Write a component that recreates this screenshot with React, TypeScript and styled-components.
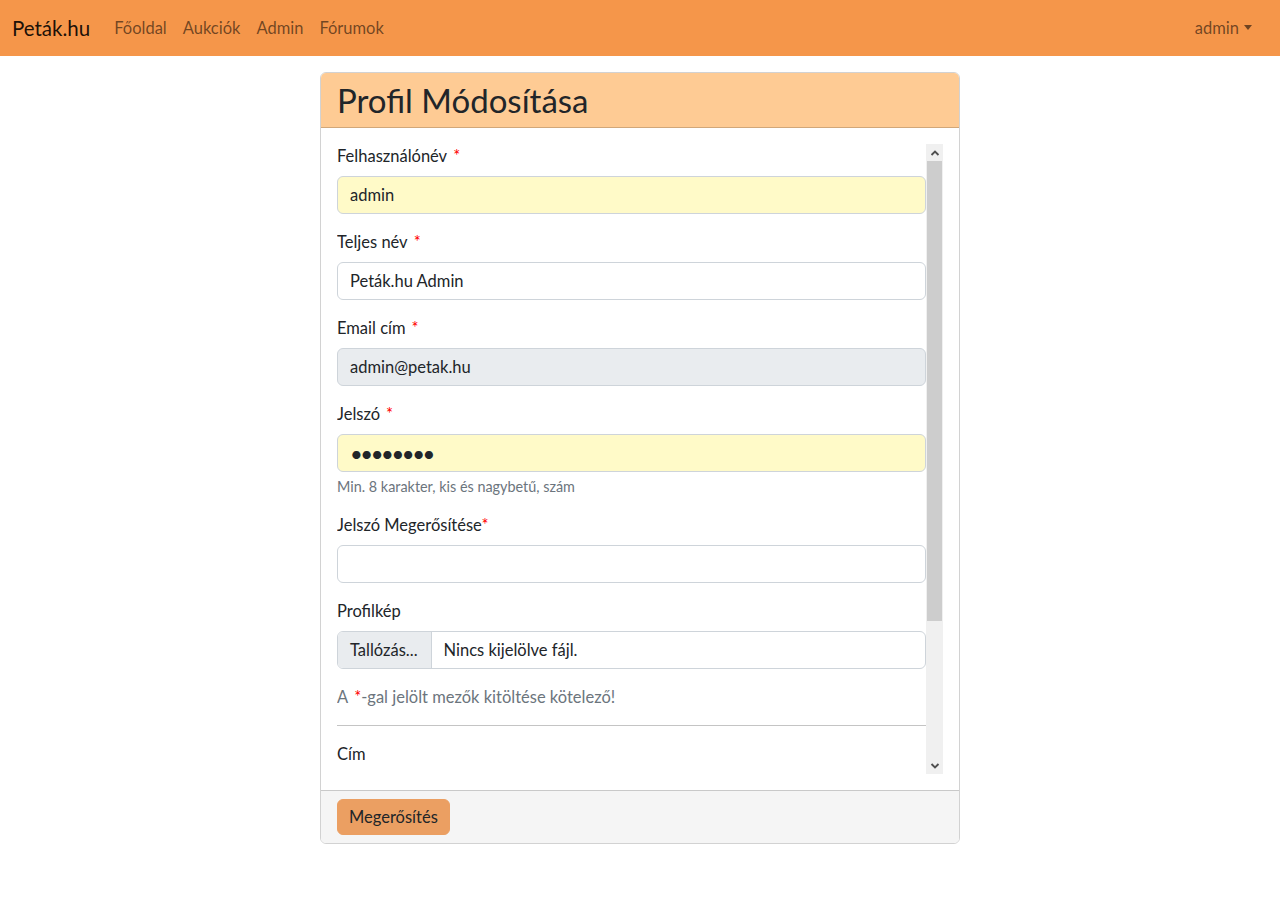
import React from "react";
import styled, { createGlobalStyle } from "styled-components";

const GlobalStyle = createGlobalStyle`
  * { box-sizing: border-box; }
  html, body { margin: 0; padding: 0; background: #fff; }
  body {
    font-family: Lato, "Noto Sans", sans-serif;
    font-size: 16.5px;
    line-height: 24px;
    color: #212529;
  }
`;

const Navbar = styled.nav`
  height: 56px;
  background: #f5964a;
  display: flex;
  align-items: center;
  padding: 0 20px 0 12px;
`;

const Brand = styled.a`
  font-size: 20.5px;
  line-height: 30px;
  color: rgba(0, 0, 0, 0.9);
  text-decoration: none;
  margin-right: 16px;
`;

const NavList = styled.div`
  display: flex;
  flex: 1;
`;

const NavLink = styled.a`
  color: rgba(0, 0, 0, 0.55);
  text-decoration: none;
  padding: 8px;
`;

const Toggle = styled(NavLink)`
  display: flex;
  align-items: center;
  &::after {
    content: "";
    display: inline-block;
    margin-left: 5px;
    border-top: 5px solid;
    border-right: 4px solid transparent;
    border-left: 4px solid transparent;
    margin-top: -2px;
  }
`;

const Main = styled.main`
  display: flex;
  justify-content: center;
  padding-top: 16px;
`;

const Card = styled.div`
  width: 640px;
  border: 1px solid rgba(0, 0, 0, 0.175);
  border-radius: 6px;
  overflow: hidden;
`;

const CardHeader = styled.div`
  background: #fecb94;
  padding: 8px 16px;
  border-bottom: 1px solid rgba(0, 0, 0, 0.175);
`;

const Title = styled.h2`
  margin: 0;
  font-size: 33px;
  font-weight: 400;
  line-height: 38px;
`;

const CardBody = styled.div`
  padding: 16px;
`;

const ScrollFrame = styled.div`
  display: flex;
  height: 630px;
`;

const ScrollContent = styled.div`
  flex: 1;
  min-width: 0;
  overflow: hidden;
`;

const ScrollBar = styled.div`
  width: 17px;
  flex: none;
  display: flex;
  flex-direction: column;
  background: #f0f0f0;
`;

const ScrollButton = styled.div`
  height: 17px;
  display: flex;
  align-items: center;
  justify-content: center;
  color: #505050;
`;

const Thumb = styled.div`
  margin: 0 1px;
  background: #cdcdcd;
`;

const Group = styled.div<{ $mb?: number }>`
  margin-bottom: ${(p) => (p.$mb ?? 16)}px;
`;

const Label = styled.label`
  display: block;
  margin-bottom: 8px;
`;

const Star = styled.span<{ $tight?: boolean }>`
  color: red;
  margin-left: ${(p) => (p.$tight ? 0 : 6)}px;
`;

const Input = styled.input<{ $variant?: "fill" | "disabled" | "plain" }>`
  display: block;
  width: 100%;
  height: 38px;
  padding: 6px 12px;
  font: inherit;
  color: #212529;
  border: 1px solid #ced4da;
  border-radius: 6px;
  outline: none;
  background: ${(p) =>
    p.$variant === "fill" ? "#fffac8" : p.$variant === "disabled" ? "#e9ecef" : "#fff"};
`;

const Dots = styled(Input)`
  letter-spacing: -2.4px;
  font-size: 22px;
`;

const Help = styled.div`
  margin-top: 4px;
  font-size: 14.4px;
  line-height: 21px;
  color: #6c757d;
`;

const FileBox = styled.div`
  display: flex;
  height: 38px;
  border: 1px solid #ced4da;
  border-radius: 6px;
  overflow: hidden;
`;

const FileButton = styled.span`
  background: #e9ecef;
  padding: 6px 13px 6px 12px;
  border-right: 1px solid #ced4da;
  display: flex;
  align-items: center;
`;

const FileName = styled.span`
  padding: 6px 12px;
  display: flex;
  align-items: center;
`;

const Muted = styled.p`
  margin: 0 0 16px;
  color: #6c757d;
`;

const NoteStar = styled.span`
  color: red;
  margin-left: 6px;
`;

const Rule = styled.hr`
  margin: 16px 0;
  border: 0;
  border-top: 1px solid #c4c4c4;
`;

const Row = styled.div`
  display: grid;
  grid-template-columns: 1fr 2fr;
  gap: 12px;
  margin-bottom: 16px;
`;

const CardFooter = styled.div`
  background: #f5f5f5;
  border-top: 1px solid rgba(0, 0, 0, 0.175);
  padding: 8px 16px;
`;

const Button = styled.button`
  font: inherit;
  color: #212529;
  background: #eb9f62;
  border: 1px solid #eb9f62;
  border-radius: 6px;
  padding: 5px 11px;
  height: 36px;
`;

const Chevron = ({ up }: { up?: boolean }) => (
  <svg width="10" height="10" viewBox="0 0 10 10">
    <path
      d={up ? "M1.5 7 L5 3.5 L8.5 7" : "M1.5 3 L5 6.5 L8.5 3"}
      fill="none"
      stroke="currentColor"
      strokeWidth="1.9"
    />
  </svg>
);

export default function App() {
  return (
    <>
      <GlobalStyle />
      <Navbar>
        <Brand href="#">Peták.hu</Brand>
        <NavList>
          <NavLink href="#">Főoldal</NavLink>
          <NavLink href="#">Aukciók</NavLink>
          <NavLink href="#">Admin</NavLink>
          <NavLink href="#">Fórumok</NavLink>
        </NavList>
        <Toggle href="#">admin</Toggle>
      </Navbar>
      <Main>
        <Card>
          <CardHeader>
            <Title>Profil Módosítása</Title>
          </CardHeader>
          <CardBody>
            <ScrollFrame>
              <ScrollContent>
                <Group>
                  <Label>
                    Felhasználónév<Star>*</Star>
                  </Label>
                  <Input $variant="fill" defaultValue="admin" />
                </Group>
                <Group>
                  <Label>
                    Teljes név<Star>*</Star>
                  </Label>
                  <Input defaultValue="Peták.hu Admin" />
                </Group>
                <Group>
                  <Label>
                    Email cím<Star>*</Star>
                  </Label>
                  <Input $variant="disabled" defaultValue="admin@petak.hu" disabled />
                </Group>
                <Group>
                  <Label>
                    Jelszó<Star>*</Star>
                  </Label>
                  <Dots $variant="fill" type="password" defaultValue="12345678" />
                  <Help>Min. 8 karakter, kis és nagybetű, szám</Help>
                </Group>
                <Group>
                  <Label>
                    Jelszó Megerősítése<Star $tight>*</Star>
                  </Label>
                  <Input type="password" />
                </Group>
                <Group>
                  <Label>Profilkép</Label>
                  <FileBox>
                    <FileButton>Tallózás...</FileButton>
                    <FileName>Nincs kijelölve fájl.</FileName>
                  </FileBox>
                </Group>
                <Muted>
                  A<NoteStar>*</NoteStar>-gal jelölt mezők kitöltése kötelező!
                </Muted>
                <Rule />
                <Label>Cím</Label>
                <Row>
                  <Input />
                  <Input />
                </Row>
                <Group>
                  <Input />
                </Group>
              </ScrollContent>
              <ScrollBar>
                <ScrollButton>
                  <Chevron up />
                </ScrollButton>
                <Thumb style={{ height: 460 }} />
                <div style={{ flex: 1 }} />
                <ScrollButton>
                  <Chevron />
                </ScrollButton>
              </ScrollBar>
            </ScrollFrame>
          </CardBody>
          <CardFooter>
            <Button>Megerősítés</Button>
          </CardFooter>
        </Card>
      </Main>
    </>
  );
}
